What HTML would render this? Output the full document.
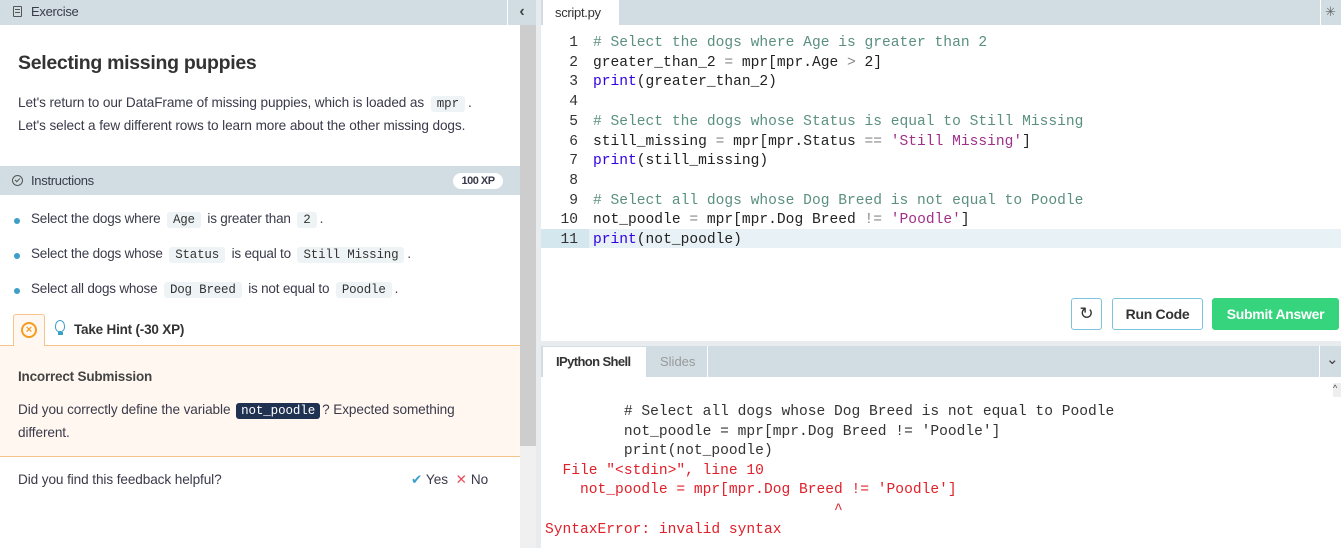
<!DOCTYPE html>
<html><head><meta charset="utf-8"><style>
*{box-sizing:border-box;margin:0;padding:0}
body{width:1341px;height:548px;overflow:hidden;background:#fff;font-family:"Liberation Sans",sans-serif;color:#3a3a4a;position:relative}
.abs{position:absolute}
.mono{font-family:"Liberation Mono",monospace}
.code{font-family:"Liberation Mono",monospace;font-size:14.6px;white-space:pre;line-height:19.7px}
.ic{background:#eef4f6;border-radius:3px;padding:1px 6px;font-family:"Liberation Mono",monospace;font-size:12.5px;color:#333;margin:0 3px}
.li{position:absolute;left:18px;font-size:13.5px;color:#3a3a4a;letter-spacing:-0.2px}
.li:before{content:"";position:absolute;left:-4px;top:7px;width:6px;height:6px;border-radius:50%;background:#3ba0c8}
.li span.t{margin-left:13px}
.c{color:#5b9081}.k{color:#3000e0}.s{color:#a0308a}.o{color:#888}
</style></head><body>
<!-- left header -->
<div class="abs" style="left:0;top:0;width:507px;height:25px;background:#d1dde3"></div>
<div class="abs" style="left:13px;top:6px;width:9px;height:11px;border:1.3px solid #555;border-radius:1px"></div>
<div class="abs" style="left:15px;top:9px;width:5px;height:1px;background:#555"></div>
<div class="abs" style="left:15px;top:12px;width:5px;height:1px;background:#555"></div>
<div class="abs" style="left:31px;top:4px;font-size:13px;color:#3a3a4a;letter-spacing:-0.3px">Exercise</div>
<div class="abs" style="left:508px;top:0;width:28px;height:25px;background:#d1dde3;font-size:16px;text-align:center;line-height:24px;color:#444;font-weight:bold">‹</div>
<!-- scrollbar -->
<div class="abs" style="left:520px;top:25px;width:16px;height:523px;background:#f0f0f0"></div>
<div class="abs" style="left:520px;top:25px;width:16px;height:421px;background:#cdcdcd"></div>
<div class="abs" style="left:536px;top:0;width:5px;height:548px;background:#e8ecee"></div>

<div class="abs" style="left:18px;top:52px;font-size:19.5px;font-weight:bold;color:#333;letter-spacing:-0.3px">Selecting missing puppies</div>
<div class="abs" style="left:18px;top:92px;font-size:13.6px;line-height:21px;width:510px;letter-spacing:-0.1px">Let's return to our DataFrame of missing puppies, which is loaded as <span class="ic">mpr</span>.<br>Let's select a few different rows to learn more about the other missing dogs.</div>

<div class="abs" style="left:0;top:166px;width:520px;height:29px;background:#d1dde3"></div>
<div class="abs" style="left:12px;top:175px;width:11px;height:11px;border:1.3px solid #555;border-radius:50%"></div>
<div class="abs" style="left:15px;top:178px;width:5px;height:3px;border-left:1.2px solid #555;border-bottom:1.2px solid #555;transform:rotate(-45deg)"></div>
<div class="abs" style="left:31px;top:173px;font-size:13px;letter-spacing:-0.3px">Instructions</div>
<div class="abs" style="left:453px;top:173px;width:50px;height:16px;background:#fff;border-radius:8px;font-size:11px;font-weight:bold;text-align:center;line-height:16px;letter-spacing:-0.5px">100 XP</div>

<div class="li" style="top:211px"><span class="t">Select the dogs where <span class="ic">Age</span> is greater than <span class="ic">2</span>.</span></div>
<div class="li" style="top:246px"><span class="t">Select the dogs whose <span class="ic">Status</span> is equal to <span class="ic">Still Missing</span>.</span></div>
<div class="li" style="top:281px"><span class="t">Select all dogs whose <span class="ic">Dog Breed</span> is not equal to <span class="ic">Poodle</span>.</span></div>

<!-- hint tabs -->
<div class="abs" style="left:0;top:345px;width:520px;height:1px;background:#f5c48a"></div>
<div class="abs" style="left:13px;top:314px;width:32px;height:32px;border:1px solid #f5c48a;border-bottom:none;border-radius:3px 3px 0 0;background:#fff8f2"></div>
<div class="abs" style="left:21px;top:322px;width:16px;height:16px;border:2px solid #f59c1e;border-radius:50%;color:#f59c1e;font-size:11px;font-weight:bold;text-align:center;line-height:12px">×</div>
<div class="abs" style="left:55px;top:320px;width:10px;height:12px;border:1.5px solid #3ba0c8;border-radius:50% 50% 40% 40%"></div>
<div class="abs" style="left:58px;top:332px;width:5px;height:3px;background:#3ba0c8"></div>
<div class="abs" style="left:74px;top:322px;font-size:13.5px;font-weight:bold;color:#333;letter-spacing:-0.2px">Take Hint (-30 XP)</div>
<div class="abs" style="left:0;top:346px;width:520px;height:111px;background:#fff7f0;border-bottom:1px solid #f5c48a"></div>
<div class="abs" style="left:18px;top:369px;font-size:13.5px;font-weight:bold;color:#444;letter-spacing:-0.2px">Incorrect Submission</div>
<div class="abs" style="left:18px;top:399px;font-size:13.6px;line-height:21px;width:490px;letter-spacing:-0.1px">Did you correctly define the variable <span class="mono" style="background:#1f3252;color:#fff;border-radius:3px;padding:1px 5px;font-size:12.5px;margin:0 2px">not_poodle</span>? Expected something different.</div>
<div class="abs" style="left:18px;top:472px;font-size:13.6px;letter-spacing:-0.1px">Did you find this feedback helpful?</div>
<div class="abs" style="left:411px;top:472px;font-size:13.6px"><span style="color:#3ba0c8">✔</span> Yes &nbsp;<span style="color:#ec4d5a">✕</span> No</div>

<!-- right header -->
<div class="abs" style="left:541px;top:0;width:800px;height:25px;background:#d1dde3"></div>
<div class="abs" style="left:543px;top:0;width:76px;height:25px;background:#fff;font-size:13px;padding:5px 0 0 12px;color:#333;letter-spacing:-0.3px">script.py</div>
<div class="abs" style="left:1320px;top:0;width:1px;height:25px;background:#fff"></div>
<div class="abs" style="left:1325px;top:4px;font-size:13px;color:#666">✳</div>

<!-- editor -->
<div class="abs" style="left:541px;top:229px;width:800px;height:19px;background:#e8f2f6"></div>
<div class="abs" style="left:541px;top:229px;width:48px;height:19px;background:#d4e6ee"></div>
<div class="abs code" style="left:541px;top:34px;width:37px;text-align:right;color:#333">1
2
3
4
5
6
7
8
9
10
11</div>
<div class="abs code" style="left:593px;top:34px;color:#222"><span class="c"># Select the dogs where Age is greater than 2</span>
greater_than_2 <span class="o">=</span> mpr[mpr.Age <span class="o">&gt;</span> 2]
<span class="k">print</span>(greater_than_2)

<span class="c"># Select the dogs whose Status is equal to Still Missing</span>
still_missing <span class="o">=</span> mpr[mpr.Status <span class="o">==</span> <span class="s">'Still Missing'</span>]
<span class="k">print</span>(still_missing)

<span class="c"># Select all dogs whose Dog Breed is not equal to Poodle</span>
not_poodle <span class="o">=</span> mpr[mpr.Dog Breed <span class="o">!=</span> <span class="s">'Poodle'</span>]
<span class="k">print</span>(not_poodle)</div>

<!-- buttons -->
<div class="abs" style="left:1071px;top:298px;width:31px;height:32px;border:1px solid #7cc4dc;border-radius:3px;text-align:center;line-height:30px;font-size:17px;color:#333">↻</div>
<div class="abs" style="left:1112px;top:298px;width:91px;height:32px;border:1px solid #7cc4dc;border-radius:3px;text-align:center;line-height:30px;font-size:14px;font-weight:bold;color:#333;letter-spacing:-0.3px">Run Code</div>
<div class="abs" style="left:1212px;top:298px;width:127px;height:32px;background:#36d57d;border-radius:3px;text-align:center;line-height:32px;font-size:14px;font-weight:bold;color:#fff;letter-spacing:-0.3px">Submit Answer</div>
<div class="abs" style="left:541px;top:341px;width:800px;height:5px;background:#e8ecee"></div>

<!-- shell -->
<div class="abs" style="left:541px;top:346px;width:800px;height:31px;background:#d1dde3"></div>
<div class="abs" style="left:543px;top:347px;width:103px;height:30px;background:#fff;font-size:13px;font-weight:bold;padding:7px 0 0 13px;color:#333;letter-spacing:-0.6px">IPython Shell</div>
<div class="abs" style="left:660px;top:354px;font-size:13px;color:#999">Slides</div>
<div class="abs" style="left:707px;top:346px;width:1px;height:31px;background:#fff"></div>
<div class="abs" style="left:1319px;top:346px;width:1px;height:31px;background:#fff"></div>
<div class="abs" style="left:1326px;top:350px;font-size:15px;color:#444">⌄</div>
<div class="abs" style="left:1333px;top:383px;width:8px;height:14px;background:#eee;font-size:9px;color:#444">^</div>
<div class="abs code" style="left:545px;top:403px;color:#333;line-height:19.6px">         # Select all dogs whose Dog Breed is not equal to Poodle
         not_poodle = mpr[mpr.Dog Breed != 'Poodle']
         print(not_poodle)
<span style="color:#e0202a">  File "&lt;stdin&gt;", line 10
    not_poodle = mpr[mpr.Dog Breed != 'Poodle']
                                 ^
SyntaxError: invalid syntax</span></div>
</body></html>
